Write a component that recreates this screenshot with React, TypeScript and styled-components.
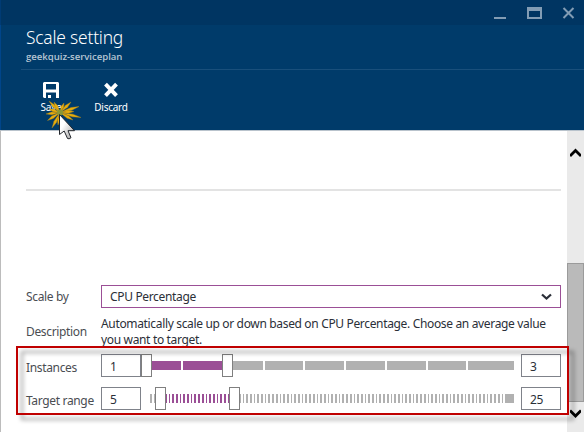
import React from "react";
import styled, { createGlobalStyle } from "styled-components";

const Global = createGlobalStyle`
  * { box-sizing: border-box; }
  body { margin: 0; overflow: hidden; background: #fff; }
`;

const Blade = styled.div`
  position: relative;
  width: 584px;
  height: 432px;
  display: flex;
  flex-direction: column;
  overflow: hidden;
  font-family: "Noto Sans", "Open Sans", sans-serif;
  font-size: 12px;
  letter-spacing: -0.34px;
  color: #2b2f38;
`;

const WindowBar = styled.div`
  height: 25px;
  flex: none;
  display: flex;
  justify-content: flex-end;
  background: #003562;
  border-left: 1px solid #003b74;
`;

const Header = styled.header`
  height: 105px;
  flex: none;
  background: #003b6a;
  border-left: 1px solid #00458a;
  color: #fff;
`;

const Titles = styled.div`
  height: 45px;
  margin-left: 20px;
  padding: 0 0 0 5px;
  border-bottom: 1px solid #194f7b;
`;

const Title = styled.h1`
  margin: 0;
  font: 300 17.4px/24px "Noto Sans", sans-serif;
  letter-spacing: -0.2px;
  white-space: nowrap;
`;

const Subtitle = styled.div`
  font: 600 9.6px/14px "Open Sans", sans-serif;
  letter-spacing: -0.03px;
  margin-top: 1px;
  color: #b6c5d3;
  white-space: nowrap;
`;

const Commands = styled.div`
  display: flex;
  padding-left: 20px;
`;

const Command = styled.button`
  width: 60px;
  padding: 11px 0 0;
  border: 0;
  background: none;
  color: #fff;
  display: flex;
  flex-direction: column;
  align-items: center;
  font: 400 10px/14px "Noto Sans", sans-serif;
  letter-spacing: -0.25px;
  svg { display: block; margin-bottom: 2px; }
`;

const Body = styled.div`
  flex: 1;
  display: flex;
  border-top: 1px solid #b9c3cc;
  border-left: 1px solid #bcbcbc;
`;

const Content = styled.main`
  width: 566px;
  padding: 58px 6px 0 25px;
`;

const Divider = styled.div`
  height: 2px;
  background: #e3e3e3;
  margin-bottom: 94px;
`;

const Row = styled.div<{ $h: number; $mt?: number }>`
  display: flex;
  align-items: center;
  height: ${(p) => p.$h}px;
  margin-top: ${(p) => p.$mt ?? 0}px;
`;

const Label = styled.label<{ $dy?: number }>`
  width: 75px;
  flex: none;
  white-space: nowrap;
  line-height: 16px;
  padding-top: ${(p) => p.$dy ?? 0}px;
  color: #4a4d52;
`;

const Select = styled.div`
  width: 460px;
  height: 23px;
  display: flex;
  align-items: center;
  justify-content: space-between;
  padding: 0 8px;
  border: 1px solid #9b4f96;
`;

const Description = styled.p`
  margin: 0;
  width: 460px;
  line-height: 16px;
  white-space: nowrap;
`;

const NumberBox = styled.div`
  width: 40px;
  height: 23px;
  flex: none;
  padding-left: 8px;
  line-height: 23px;
  border: 1px solid #7f828a;
  background: #fff;
`;

const Track = styled.svg`
  display: block;
  width: 380px;
  height: 23px;
  flex: none;
`;

const Scroll = styled.div`
  width: 17px;
  display: flex;
  flex-direction: column;
  background: #eaeaea;
`;

const ScrollButton = styled.div<{ $h: number; $pt: number }>`
  height: ${(p) => p.$h}px;
  flex: none;
  padding: ${(p) => p.$pt}px 0 0 3px;
  svg { display: block; }
`;

const Thumb = styled.div`
  height: 139px;
  flex: none;
  background: #bababa;
  border: 1px solid #9b9b9b;
`;

const Highlight = styled.div`
  position: absolute;
  left: 16px;
  top: 346px;
  width: 553px;
  height: 69px;
  border: 2px solid #c00000;
  filter: drop-shadow(5px 5px 2px rgba(0, 0, 0, 0.4));
`;

const Pointer = styled.svg`
  position: absolute;
  left: 44px;
  top: 98px;
`;

const PURPLE = "#9b4f96";
const GRAY = "#b1b1b1";
const TRACK_END = 373;

const segmentStarts = [2, 42, 83, 124, 164, 205, 246, 287, 327];

const segments = segmentStarts.map((x, i) => ({
  x,
  w: (i === segmentStarts.length - 1 ? TRACK_END : segmentStarts[i + 1] - 2) - x,
}));

const tickStart = (i: number) => Math.round(9 + i * 3.7 + 0.001);

const ticks = Array.from({ length: 96 }, (_, i) => ({
  x: tickStart(i),
  w: tickStart(i + 1) - tickStart(i) - 2,
}));

const burstTips = [
  [5, 3], [10, 4], [20, 5], [27, 4], [35, 8.5], [30, 13.5],
  [37, 19.5], [29, 22], [14, 27], [8, 30], [3.5, 22.5], [2, 16], [5, 11],
];

function ray([x, y]: number[]) {
  const cx = 16;
  const cy = 14.5;
  const d = Math.hypot(x - cx, y - cy);
  const nx = ((y - cy) / d) * 1.4;
  const ny = ((cx - x) / d) * 1.4;
  const mx = cx + (x - cx) * 0.6;
  const my = cy + (y - cy) * 0.6;
  return `${cx},${cy} ${mx + nx},${my + ny} ${x},${y} ${mx - nx},${my - ny}`;
}

function Handle({ x }: { x: number }) {
  return (
    <g>
      <rect x={x} y={0} width={11} height={23} fill="#7f7f7f" />
      <rect x={x + 1} y={1} width={9} height={21} fill="#fff" />
    </g>
  );
}

function InstancesTrack() {
  return (
    <Track viewBox="0 0 380 23" shapeRendering="crispEdges">
      {segments.map((s) => (
        <rect key={s.x} x={s.x} y={7} width={s.w} height={9} fill={s.x < 80 ? PURPLE : GRAY} />
      ))}
      <Handle x={0} />
      <rect x={42} y={7} width={41} height={9} fill={PURPLE} />
      <Handle x={81} />
    </Track>
  );
}

function TargetTrack() {
  return (
    <Track viewBox="0 0 380 23" shapeRendering="crispEdges">
      {ticks.map((t) => (
        <rect key={t.x} x={t.x} y={7} width={t.w} height={9} fill={t.x > 15 && t.x < 92 ? PURPLE : GRAY} />
      ))}
      <rect x={364} y={7} width={9} height={9} fill={GRAY} />
      <Handle x={14} />
      <Handle x={88} />
    </Track>
  );
}

export default function App() {
  return (
    <Blade>
      <Global />
      <WindowBar>
        <svg width="90" height="25" fill="#829cb4">
          <path d="M0 17h12v2H0zM33 7h15v12H33zM35 11v6h11v-6z" fillRule="evenodd" />
          <path d="M69.5 8l10 10M79.5 8l-10 10" stroke="#829cb4" strokeWidth="2" />
        </svg>
      </WindowBar>
      <Header>
        <Titles>
          <Title>Scale setting</Title>
          <Subtitle>geekquiz-serviceplan</Subtitle>
        </Titles>
        <Commands>
          <Command>
            <svg width="16" height="17" fill="#fff">
              <path d="M1 1h14l1 1v15h-3v-5.5H3V17H1l-1-1V2zM3 3v5.5h10V3zM5 14h3v3H5z" fillRule="evenodd" />
            </svg>
            Save
          </Command>
          <Command>
            <svg width="16" height="17" stroke="#fff" strokeWidth="3.9">
              <path d="M2.5 3.2l11 11.5M13.5 3.2l-11 11.5" />
            </svg>
            Discard
          </Command>
        </Commands>
      </Header>
      <Body>
        <Content>
          <Divider />
          <Row $h={23}>
            <Label>Scale by</Label>
            <Select>
              CPU Percentage
              <svg width="11" height="8" fill="none" stroke="#2b2f38" strokeWidth="2.3">
                <path d="M1 1.5l4.5 4 4.5-4" />
              </svg>
            </Select>
          </Row>
          <Row $h={32} $mt={8}>
            <Label>Description</Label>
            <Description>
              Automatically scale up or down based on CPU Percentage. Choose an average value
              <br />
              you want to target.
            </Description>
          </Row>
          <Row $h={23} $mt={6}>
            <Label $dy={4}>Instances</Label>
            <NumberBox>1</NumberBox>
            <InstancesTrack />
            <NumberBox>3</NumberBox>
          </Row>
          <Row $h={23} $mt={10}>
            <Label $dy={4}>Target range</Label>
            <NumberBox>5</NumberBox>
            <TargetTrack />
            <NumberBox>25</NumberBox>
          </Row>
        </Content>
        <Scroll>
          <ScrollButton $h={132} $pt={17}>
            <svg width="11" height="10" fill="none" stroke="#000" strokeWidth="2.8">
              <path d="M0 8l5.5-5.5L11 8" />
            </svg>
          </ScrollButton>
          <Thumb />
          <ScrollButton $h={30} $pt={7}>
            <svg width="11" height="10" fill="none" stroke="#000" strokeWidth="2.8">
              <path d="M0 1.5L5.5 7 11 1.5" />
            </svg>
          </ScrollButton>
        </Scroll>
      </Body>
      <Highlight />
      <Pointer width="40" height="44">
        <defs>
          <linearGradient id="arrow" x1="0" y1="0" x2="1" y2="1">
            <stop offset="0.35" stopColor="#fff" />
            <stop offset="1" stopColor="#999" />
          </linearGradient>
        </defs>
        {burstTips.map((tip) => (
          <polygon key={tip.join()} points={ray(tip)} fill="#e8ad0c" stroke="#a9841c" strokeWidth="0.4" />
        ))}
        <circle cx="16" cy="14.5" r="3" fill="#8b9736" />
        <path
          d="M15.5 16.5v20l4.7-3.5 3.3 7.5q1.5 1 3.500-.8l-3-7h6.500z"
          fill="url(#arrow)"
          stroke="#22262c"
          strokeWidth="1"
        />
      </Pointer>
    </Blade>
  );
}
